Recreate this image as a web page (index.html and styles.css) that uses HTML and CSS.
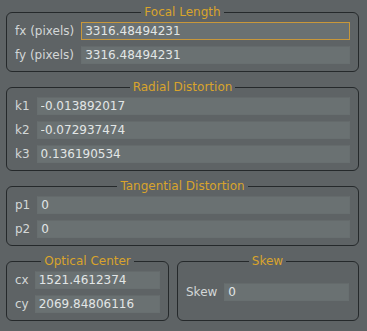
FILE: index.html
```html
<!DOCTYPE html>
<html lang="en">
<head>
    <meta charset="UTF-8">
    <meta name="viewport" content="width=device-width, initial-scale=1.0">
    <title>Camera Intrinsics</title>
    <link rel="stylesheet" href="styles.css">
</head>
<body>
    <div class="panel">
        <div class="group">
            <div class="group-title">Focal Length</div>
            <div class="fields">
                <label for="fx">fx (pixels)</label>
                <input type="text" id="fx" class="focused" value="3316.48494231">
                <label for="fy">fy (pixels)</label>
                <input type="text" id="fy" value="3316.48494231">
            </div>
        </div>

        <div class="group">
            <div class="group-title">Radial Distortion</div>
            <div class="fields">
                <label for="k1">k1</label>
                <input type="text" id="k1" value="-0.013892017">
                <label for="k2">k2</label>
                <input type="text" id="k2" value="-0.072937474">
                <label for="k3">k3</label>
                <input type="text" id="k3" value="0.136190534">
            </div>
        </div>

        <div class="group">
            <div class="group-title">Tangential Distortion</div>
            <div class="fields">
                <label for="p1">p1</label>
                <input type="text" id="p1" value="0">
                <label for="p2">p2</label>
                <input type="text" id="p2" value="0">
            </div>
        </div>

        <div class="bottom-row">
            <div class="group optical">
                <div class="group-title">Optical Center</div>
                <div class="fields">
                    <label for="cx">cx</label>
                    <input type="text" id="cx" value="1521.4612374">
                    <label for="cy">cy</label>
                    <input type="text" id="cy" value="2069.84806116">
                </div>
            </div>
            <div class="group skew">
                <div class="group-title">Skew</div>
                <div class="fields">
                    <label for="skew">Skew</label>
                    <input type="text" id="skew" value="0">
                </div>
            </div>
        </div>
    </div>
</body>
</html>
```

FILE: styles.css
```css
body {
    margin: 0;
    padding: 0;
    background-color: #5e6365;
    font-family: "DejaVu Sans", Verdana, sans-serif;
    font-size: 12px;
    color: #d6dada;
}

.panel {
    padding: 12px 8px 0 6px;
}

.group {
    border: 1px solid #25292b;
    border-radius: 6px;
    padding: 0 8px 7px 8px;
    margin-bottom: 15px;
}

.group-title {
    width: fit-content;
    margin: -8px auto 3px auto;
    padding: 0 3px;
    line-height: 14px;
    background-color: #5e6365;
    color: #d9a42c;
}

.fields {
    display: grid;
    grid-template-columns: auto 1fr;
    column-gap: 7px;
    row-gap: 6px;
    align-items: center;
}

label {
    line-height: 18px;
    color: #d3d7d7;
}

input {
    height: 18px;
    box-sizing: border-box;
    width: 100%;
    margin: 0;
    padding: 0 3px;
    border: 1px solid #686f70;
    border-top-color: #646a6b;
    background-color: #6a7172;
    color: #e2e6e6;
    font-family: "DejaVu Sans", Verdana, sans-serif;
    font-size: 12px;
    outline: none;
}

input.focused {
    border-color: #c8973a;
}

.bottom-row {
    display: flex;
    gap: 8px;
}

.bottom-row .group {
    margin-bottom: 0;
}

.optical {
    width: 163px;
    box-sizing: border-box;
}

.optical .fields {
    column-gap: 6px;
}

.skew {
    flex: 1;
    display: flex;
    flex-direction: column;
    padding-right: 9px;
}

.skew .fields {
    margin: auto 0;
}
```
